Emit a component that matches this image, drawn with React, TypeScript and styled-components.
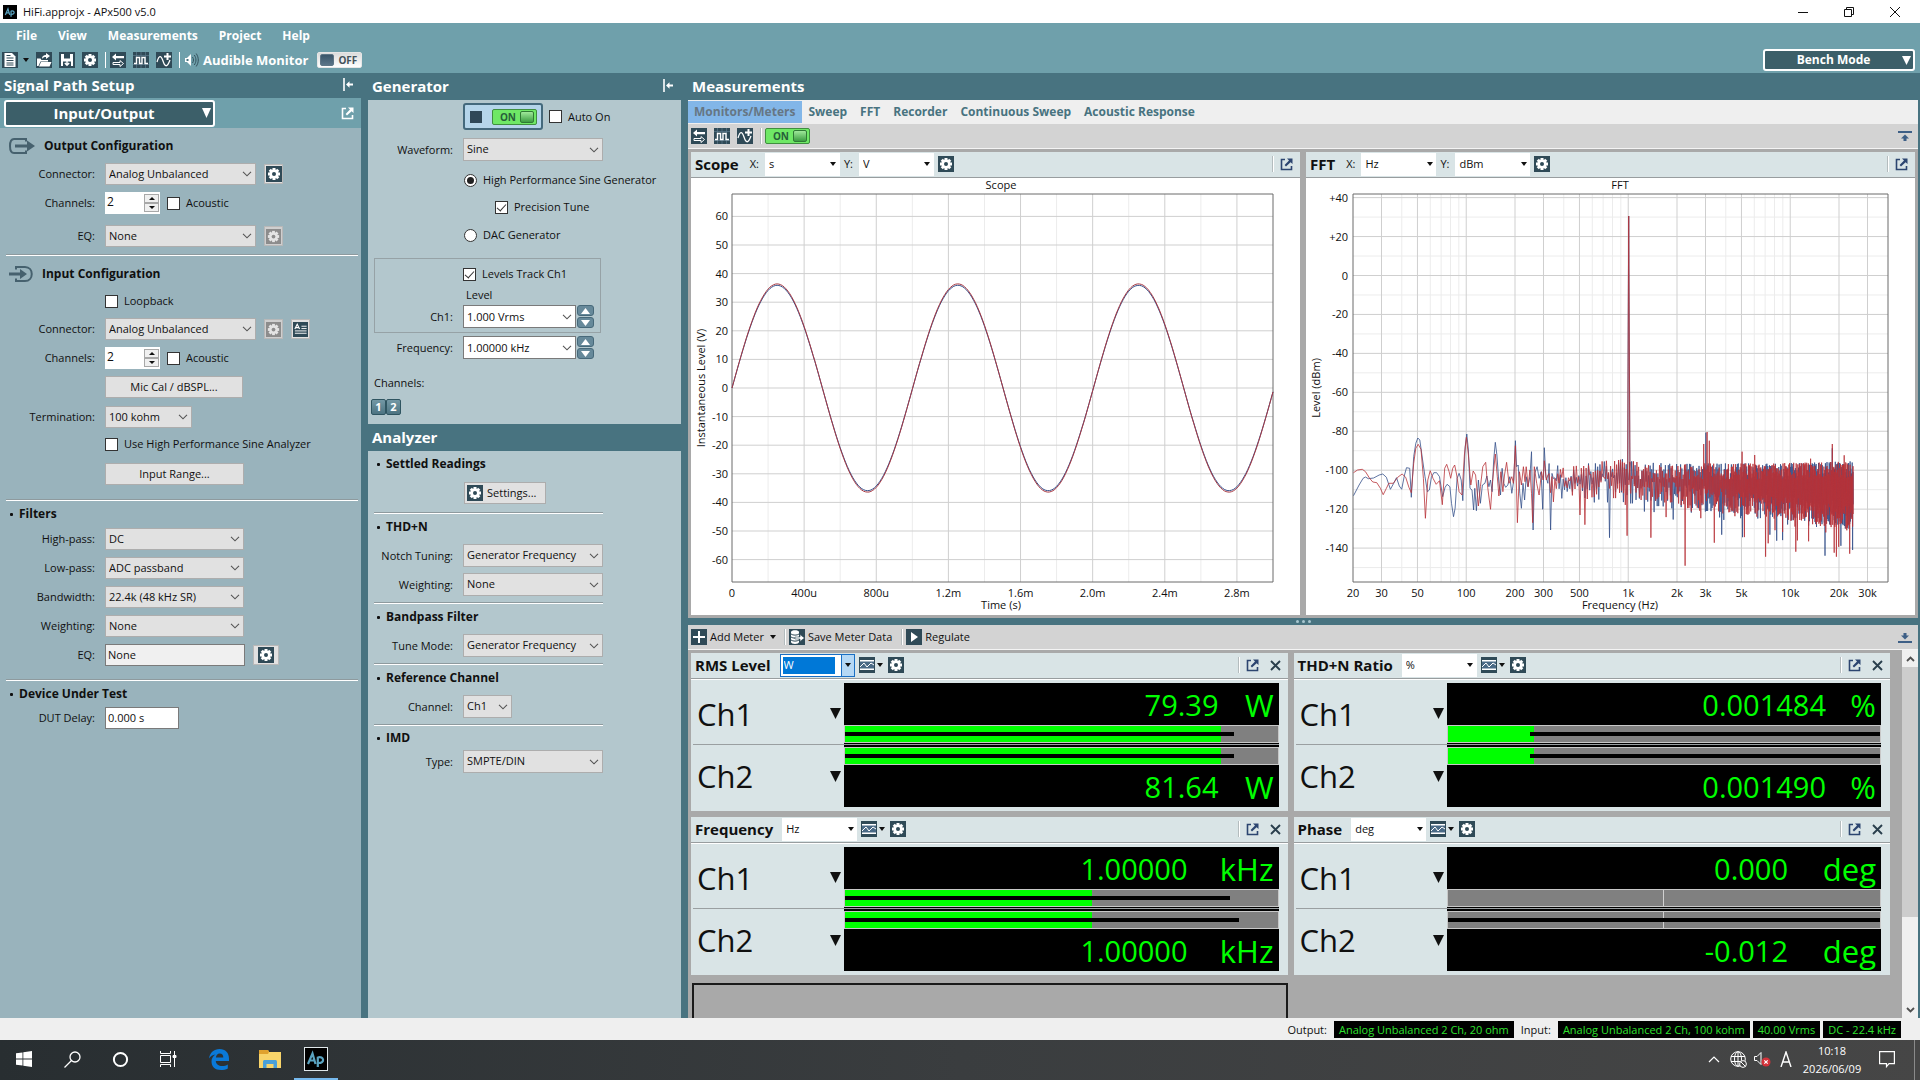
import React, { useId } from "react";
import styled, { createGlobalStyle, css } from "styled-components";

const c = {
  menu: "#6fa0ab",
  dark: "#487380",
  deep: "#3c5f69",
  side: "#99b3bc",
  mid: "#b3c7cd",
  gutter: "#a9a9a9",
  bar: "#d3d3d3",
  face: "#e1e1e1",
  pale: "#d9e4e6",
  navy: "#2c4570",
  green: "#00ff00",
};

const Global = createGlobalStyle`
  * { box-sizing: border-box; }
  body { margin: 0; font: 11px/16px "Open Sans", "Noto Sans", sans-serif; color: #101010; background: ${c.dark}; }
  button, input, select { font: inherit; color: inherit; margin: 0; border-radius: 0; }
  button { padding: 0; border: 0; background: none; cursor: pointer; }
  h1, h2, h3, p { margin: 0; }
  svg { display: block; flex: none; }
`;

/* ---------- shell ---------- */

const Page = styled.div`
  display: flex;
  flex-direction: column;
  height: 100vh;
  min-height: 860px;
`;
const TitleBar = styled.header`
  display: flex;
  align-items: center;
  height: 23px;
  padding: 0 2px 0 3px;
  background: #fff;
  font-size: 11px;
  gap: 6px;
`;
const WindowButtons = styled.div`
  display: flex;
  margin-left: auto;
`;
const WindowButton = styled.button`
  display: grid;
  place-items: center;
  width: 46px;
  height: 22px;
`;
const TopArea = styled.div`
  display: flex;
  justify-content: space-between;
  align-items: flex-end;
  height: 50px;
  padding: 0 5px 2px 0;
  background: ${c.menu};
`;
const MenuBar = styled.nav`
  display: flex;
  height: 26px;
  align-items: center;
  gap: 21px;
  padding-left: 16px;
  color: #fff;
  font-size: 12px;
  font-weight: 700;
`;
const MenuItem = styled.button``;
const ToolRow = styled.div`
  display: flex;
  align-items: center;
  height: 22px;
  padding-left: 2px;
  color: #fff;
`;
const IconButton = styled.button<{ $gap?: number; $inner?: number }>`
  display: flex;
  align-items: center;
  gap: ${(p) => p.$inner ?? 3}px;
  margin-right: ${(p) => p.$gap ?? 7}px;
`;
const Divider = styled.span<{ $gap?: number; $light?: boolean }>`
  width: 2px;
  height: 16px;
  margin-right: ${(p) => p.$gap ?? 4}px;
  border-left: 1px solid ${(p) => (p.$light ? "#fff" : "#b4bcbe")};
  border-right: 1px solid ${(p) => (p.$light ? "transparent" : "#fff")};
`;
const ToolLabel = styled.span`
  margin: 0 9px 0 4px;
  font-size: 13px;
  font-weight: 700;
`;
const PickerButton = styled.button<{ $large?: boolean }>`
  display: flex;
  align-items: center;
  width: ${(p) => (p.$large ? 211 : 152)}px;
  height: ${(p) => (p.$large ? 27 : 22)}px;
  padding-right: 2px;
  border: 2px solid #fff;
  border-radius: 3px;
  background: ${c.deep};
  color: #fff;
  font-size: ${(p) => (p.$large ? 15 : 12)}px;
  font-weight: 700;
  span { flex: 1; }
`;
const Workspace = styled.main`
  display: grid;
  grid-template-columns: 361px 313px minmax(0, 1fr);
  column-gap: 7px;
  flex: 1;
  min-height: 0;
  padding-right: 2px;
  background: ${c.dark};
`;
const Column = styled.section`
  display: flex;
  flex-direction: column;
  min-width: 0;
  min-height: 0;
`;
const PanelTitle = styled.div<{ $short?: boolean }>`
  display: flex;
  align-items: center;
  justify-content: space-between;
  flex: none;
  height: ${(p) => (p.$short ? 25 : 27)}px;
  padding: 0 8px 2px 4px;
  color: #fff;
  h2 { font-size: 15px; line-height: 20px; font-weight: 700; }
`;
const SubBar = styled.div`
  display: flex;
  align-items: center;
  justify-content: space-between;
  flex: none;
  height: 30px;
  padding: 0 7px 0 4px;
  background: ${c.menu};
  color: #fff;
`;
const SideBody = styled.div`
  flex: 1;
  background: ${c.side};
`;
const MidBody = styled.div<{ $fill?: boolean }>`
  flex: ${(p) => (p.$fill ? 1 : "none")};
  height: ${(p) => (p.$fill ? "auto" : "324px")};
  padding: 3px 0 0 6px;
  background: ${c.mid};
`;

/* ---------- form parts ---------- */

const Rule = styled.hr<{ $short?: boolean; $top?: number }>`
  height: 2px;
  margin: ${(p) => p.$top ?? 7}px 0 0 ${(p) => (p.$short ? 0 : 6)}px;
  width: ${(p) => (p.$short ? 229 : 352)}px;
  border: 0;
  border-top: 1px solid #8e9a9e;
  border-bottom: 1px solid #fff;
`;
const ConfigTitle = styled.h3`
  display: flex;
  align-items: center;
  gap: 9px;
  height: 35px;
  padding-left: 9px;
  font-size: 12px;
  font-weight: 700;
`;
const SectionTitle = styled.h3<{ $inset?: number; $height?: number }>`
  display: flex;
  align-items: center;
  gap: 6px;
  height: ${(p) => p.$height ?? 26}px;
  padding-left: ${(p) => p.$inset ?? 10}px;
  font-size: 12px;
  font-weight: 700;
  &::before { content: ""; width: 3px; height: 3px; background: #101010; border-radius: 1px; }
`;
const FieldRow = styled.div<{ $mid?: boolean; $top?: number; $height?: number }>`
  display: grid;
  grid-template-columns: ${(p) => (p.$mid ? 79 : 95)}px minmax(0, 1fr);
  column-gap: 10px;
  align-items: center;
  height: ${(p) => p.$height ?? 22}px;
  margin-top: ${(p) => p.$top ?? 7}px;
`;
const FieldLabel = styled.label`
  text-align: right;
  white-space: nowrap;
`;
const Controls = styled.div<{ $gap?: number; $indent?: number }>`
  display: flex;
  align-items: center;
  gap: ${(p) => p.$gap ?? 8}px;
  grid-column: 2;
  padding-left: ${(p) => p.$indent ?? 0}px;
  white-space: nowrap;
`;
const SelectBox = styled.span<{ $w: number; $h?: number; $white?: boolean }>`
  display: inline-grid;
  align-items: center;
  width: ${(p) => p.$w}px;
  height: ${(p) => p.$h ?? 22}px;
  border: 1px solid ${(p) => (p.$white ? "#7a7a7a" : "#adadad")};
  background: ${(p) => (p.$white ? "#fff" : c.face)};
  > * { grid-area: 1 / 1; }
  > svg { justify-self: end; margin-right: 3px; pointer-events: none; }
  select, input {
    appearance: none;
    width: 100%;
    height: 100%;
    min-width: 0;
    padding: 0 0 1px 3px;
    border: 0;
    outline: 0;
    background: transparent;
  }
`;
const TextBox = styled.input<{ $w: number; $off?: boolean }>`
  width: ${(p) => p.$w}px;
  height: 22px;
  padding: 0 0 2px 2px;
  border: 1px solid #7a7a7a;
  background: ${(p) => (p.$off ? "#f0f0f0" : "#fff")};
`;
const SpinBox = styled.span`
  display: flex;
  align-items: center;
  width: 55px;
  height: 22px;
  padding-right: 1px;
  background: #fff;
  input { width: 39px; height: 20px; padding: 0 0 4px 2px; border: 0; background: transparent; font-size: 12px; }
`;
const SpinArrows = styled.span`
  display: flex;
  flex-direction: column;
  button {
    display: grid;
    place-items: center;
    width: 15px;
    height: 9px;
    border: 1px solid #a8a8a8;
    background: #f0f0f0;
  }
`;
const StepArrows = styled.span`
  display: flex;
  flex-direction: column;
  gap: 1px;
  button {
    display: grid;
    place-items: center;
    width: 17px;
    height: 11px;
    border: 1px solid #47697a;
    border-radius: 3px;
    background: #66899a;
  }
`;
const Check = styled.label<{ $gap?: number }>`
  display: inline-flex;
  align-items: center;
  gap: ${(p) => p.$gap ?? 6}px;
  white-space: nowrap;
  input {
    appearance: none;
    display: grid;
    place-items: center;
    width: 13px;
    height: 13px;
    border: 1px solid #333;
    background: #fff;
  }
  input[type="radio"] { border-radius: 50%; }
  input[type="checkbox"]:checked::after {
    content: "";
    width: 4px;
    height: 8px;
    margin-bottom: 2px;
    border: solid #333;
    border-width: 0 1px 1px 0;
    transform: rotate(42deg);
  }
  input[type="radio"]:checked::after {
    content: "";
    width: 7px;
    height: 7px;
    border-radius: 50%;
    background: #222;
  }
`;
const PushButton = styled.button<{ $w: number; $start?: boolean }>`
  display: flex;
  align-items: center;
  justify-content: ${(p) => (p.$start ? "flex-start" : "center")};
  gap: 4px;
  width: ${(p) => p.$w}px;
  height: 22px;
  padding-left: ${(p) => (p.$start ? 2 : 0)}px;
  border: 1px solid #adadad;
  background: ${c.face};
`;
const SmallButton = styled.button<{ $w?: number; $off?: boolean }>`
  display: grid;
  place-items: center;
  width: ${(p) => p.$w ?? 19}px;
  height: 20px;
  border: 1px solid #b8b8b8;
  background: ${(p) => (p.$off ? "#cfcfcf" : c.face)};
`;
const GroupBox = styled.div`
  width: 227px;
  height: 75px;
  margin-top: 12px;
  padding-top: 5px;
  box-shadow: inset 0 0 0 1px #96a2a6;
`;
const ToggleShell = styled.button<{ $on?: boolean }>`
  display: flex;
  align-items: center;
  gap: 4px;
  width: 45px;
  height: 16px;
  padding: 0 2px;
  flex-direction: ${(p) => (p.$on ? "row-reverse" : "row")};
  border: 1px solid ${(p) => (p.$on ? "#3f8f3f" : "#e6e6e6")};
  border-radius: 2px;
  background: ${(p) => (p.$on ? "#6fe866" : "linear-gradient(#dcdcdc, #fff)")};
  color: ${(p) => (p.$on ? "#27603a" : "#44525a")};
  font-size: 10px;
  line-height: 12px;
  font-weight: 700;
  i {
    width: 14px;
    height: 12px;
    border-radius: 2px;
    border: 1px solid ${(p) => (p.$on ? "#2f7a35" : "#5f7686")};
    background: ${(p) => (p.$on ? "linear-gradient(#9fe89a, #3c9e42)" : "linear-gradient(#3a566a, #5b7588)")};
  }
`;
const GeneratorSwitch = styled.span`
  display: flex;
  align-items: center;
  justify-content: space-between;
  width: 80px;
  height: 27px;
  padding: 0 4px 0 5px;
  border: 2px solid #44697c;
  border-radius: 3px;
  background: #b5d5ea;
`;
const StopMark = styled.span`
  width: 12px;
  height: 12px;
  background: #2f4858;
`;
const ChannelButtons = styled.div`
  display: flex;
  margin: 5px 0 0 -3px;
  button {
    width: 15px;
    height: 16px;
    border: 1px solid #2f5561;
    border-radius: 2px;
    background: linear-gradient(#7398a5, #4d7482);
    color: #fff;
    font-size: 11px;
    line-height: 12px;
    font-weight: 700;
  }
`;

/* ---------- measurements ---------- */

const Tabs = styled.nav`
  display: flex;
  flex: none;
  height: 24px;
  padding-top: 1px;
  background: #efefef;
`;
const Tab = styled.button<{ $active?: boolean }>`
  height: 22px;
  padding: 0 7px 0 6px;
  background: ${(p) => (p.$active ? "#82b6e8" : "transparent")};
  color: ${(p) => (p.$active ? "#667684" : "#487380")};
  font-size: 12px;
  font-weight: 700;
`;
const ToolStrip = styled.div`
  display: flex;
  align-items: center;
  flex: none;
  height: 25px;
  padding: 0 6px 0 3px;
  background: ${c.bar};
  border-bottom: 1px solid #f4f4f4;
`;
const StripEnd = styled.span`
  margin-left: auto;
`;
const ChartRow = styled.div`
  display: grid;
  grid-template-columns: minmax(0, 1fr) minmax(0, 1fr);
  gap: 6px;
  flex: 1;
  min-height: 0;
  padding: 3px;
  background: ${c.gutter};
`;
const Card = styled.article<{ $white?: boolean }>`
  display: flex;
  flex-direction: column;
  min-height: 0;
  background: ${(p) => (p.$white ? "#fff" : c.pale)};
`;
const CardHead = styled.div<{ $wide?: boolean }>`
  display: flex;
  align-items: center;
  flex: none;
  height: 26px;
  padding: 0 7px 1px 4px;
  border-bottom: 1px solid #989d9f;
  background: ${c.pale};
  h3 { font-size: 15px; line-height: 20px; font-weight: 700; white-space: nowrap; margin-right: ${(p) => (p.$wide ? 11 : 9)}px; }
  label { margin-right: 6px; }
`;
const UnitSelect = styled.span<{ $focus?: boolean }>`
  display: grid;
  grid-template-columns: 1fr 13px;
  align-items: center;
  flex: none;
  width: 75px;
  height: 23px;
  margin-right: 4px;
  border: ${(p) => (p.$focus ? "1px solid #1a6fc4" : "0")};
  background: #fff;
  select {
    appearance: none;
    grid-area: 1 / 1 / 2 / 3;
    height: 100%;
    min-width: 0;
    padding: 0 0 0 4px;
    border: 0;
    outline: 0;
    background: transparent;
    ${(p) => p.$focus && css`
      padding: 0 0 1px 3px;
      color: #fff;
      background: linear-gradient(#0078d7, #0078d7) 2px 2px / 52px 17px no-repeat;
    `}
  }
  > span {
    display: grid;
    place-items: center;
    grid-area: 1 / 2;
    height: 100%;
    pointer-events: none;
    ${(p) => p.$focus && css`background: #b5d8f5; border-left: 1px solid #1a6fc4;`}
  }
`;
const HeadEnd = styled.span`
  display: flex;
  align-items: center;
  gap: 6px;
  margin-left: auto;
`;
const Chart = styled.svg`
  flex: 1;
  width: 100%;
  min-height: 0;
  font: 11px "Open Sans", "Noto Sans", sans-serif;
  fill: #101010;
`;
const Splitter = styled.div`
  display: flex;
  align-items: center;
  justify-content: center;
  gap: 3px;
  flex: none;
  height: 7px;
  i { width: 3px; height: 3px; border-radius: 50%; background: #a9c6cf; }
`;
const MeterPane = styled.div`
  display: flex;
  flex: none;
  height: 368px;
  overflow: hidden;
  background: ${c.gutter};
`;
const MeterGrid = styled.div`
  display: grid;
  grid-template-columns: minmax(0, 1fr) minmax(0, 1fr);
  grid-auto-rows: 158px;
  gap: 6px;
  flex: 1;
  padding: 3px 12px 0 3px;
`;
const EmptySlot = styled.div`
  margin: 2px 0 0 1px;
  border: 2px solid #1a1a1a;
`;
const ScrollTrack = styled.div`
  display: flex;
  flex-direction: column;
  width: 16px;
  background: #f0f0f0;
`;
const ScrollArrow = styled.button`
  display: grid;
  place-items: center;
  height: 17px;
  color: #505050;
`;
const ScrollThumb = styled.div`
  height: 250px;
  margin-bottom: auto;
  background: #cdcdcd;
`;
const MeterBody = styled.div`
  display: grid;
  grid-template-rows: 62px 62px;
  flex: 1;
  padding: 3px 9px 0 2px;
  border-top: 1px solid #fff;
`;
const MeterLine = styled.div`
  display: grid;
  grid-template-columns: 151px minmax(0, 1fr);
  &:first-child { border-bottom: 1px solid #9a9fa1; }
`;
const ChannelName = styled.div`
  display: flex;
  align-items: center;
  justify-content: space-between;
  padding: 0 3px 0 4px;
  font-size: 31px;
  line-height: 40px;
`;
const Display = styled.div<{ $flip?: boolean }>`
  display: flex;
  flex-direction: ${(p) => (p.$flip ? "column-reverse" : "column")};
  background: #000;
`;
const Readout = styled.output<{ $unitWidth: number }>`
  display: flex;
  justify-content: flex-end;
  height: 42px;
  padding-right: 5px;
  color: ${c.green};
  font-size: 29px;
  line-height: 44px;
  white-space: nowrap;
  b { font-size: 31px; font-weight: 400; width: ${(p) => p.$unitWidth}px; text-align: right; }
`;
const Gauge = styled.div`
  display: grid;
  align-items: center;
  height: 18px;
  border: 1px solid #c8c8c8;
  background: #808080;
  > * { grid-area: 1 / 1; }
`;
const GaugeFill = styled.div`
  height: 100%;
  background: ${c.green};
`;
const GaugePeak = styled.div`
  height: 4px;
  background: #000;
`;
const GaugeMid = styled.div`
  justify-self: center;
  width: 1px;
  height: 100%;
  background: #d0d0d0;
`;

/* ---------- bottom bars ---------- */

const StatusBar = styled.footer`
  display: flex;
  align-items: center;
  justify-content: flex-end;
  gap: 3px;
  flex: none;
  height: 22px;
  padding: 1px 19px 0 0;
  background: #efefef;
  span { margin: 0 4px; }
  output { padding: 0 5px; height: 17px; line-height: 17px; background: #000; color: #2fe02f; }
`;
const Taskbar = styled.footer`
  display: flex;
  flex: none;
  height: 40px;
  background: linear-gradient(90deg, #282e31, #3a3d3f 50%, #464646);
  color: #fff;
`;
const TaskButton = styled.button<{ $active?: boolean; $w?: number }>`
  display: grid;
  place-items: center;
  width: ${(p) => p.$w ?? 48}px;
  border-bottom: 2px solid ${(p) => (p.$active ? "#76b9ed" : "transparent")};
`;
const Tray = styled.div`
  display: flex;
  align-items: center;
  margin-left: auto;
`;
const Clock = styled.time`
  width: 68px;
  text-align: center;
  line-height: 18px;
`;
const Edge = styled.span`
  width: 6px;
  height: 40px;
  margin-left: 6px;
  border-left: 1px solid #8a8a8a;
`;

/* ---------- icons ---------- */

const Tile = ({ children, s = 16, fill = "#2f4a57" }: { children: React.ReactNode; s?: number; fill?: string }) => (
  <svg width={s} height={s} viewBox="0 0 16 16" aria-hidden="true">
    <rect width="16" height="16" fill={fill} />
    {children}
  </svg>
);
const Gear = ({ s = 16, off }: { s?: number; off?: boolean }) => (
  <Tile s={s} fill={off ? "#8c8c8c" : undefined}>
    <g fill={off ? "#e4e4e4" : "#fff"}>
      {[0, 45, 90, 135].map((a) => (
        <rect key={a} x="6.5" y="2" width="3" height="12" transform={`rotate(${a} 8 8)`} />
      ))}
      <circle cx="8" cy="8" r="4.6" />
    </g>
    <circle cx="8" cy="8" r="2" fill={off ? "#8c8c8c" : "#2f4a57"} />
  </Tile>
);
const Swap = () => (
  <Tile>
    <path d="M2 5l4-3.5V4h8v2.2H6v2.3z" fill="#fff" />
    <path d="M13.5 11.5L10 8.600v1.900H3v2h7v2z" fill="none" stroke="#fff" />
  </Tile>
);
const Square = () => (
  <Tile>
    <path d="M0 3.500h16M0 12.500h16M3.500 0v16M12.500 0v16M8 0v16" stroke="#5b7a8c" strokeWidth=".7" />
    <path d="M1 11.500h2.500v-6h3v6h2.500v-6h3v6H15" fill="none" stroke="#fff" strokeWidth="1.400" />
  </Tile>
);
const AddWave = () => (
  <Tile>
    <path d="M1 10c2-7 4-7 6-1s4 7 7-1" fill="none" stroke="#fff" strokeWidth="1.300" />
    <path d="M11.500 1v7M8 4.500h7" stroke="#fff" strokeWidth="2" />
  </Tile>
);
const Graph = () => (
  <Tile>
    <rect x="1" y="3" width="14" height="10" fill="#fff" />
    <rect x="1" y="4.500" width="14" height="7" fill="#4a6a86" />
    <path d="M1 10l4-4 3 4 4-4 3 2" fill="none" stroke="#fff" />
  </Tile>
);
const NewDoc = () => (
  <Tile>
    <path d="M2.500 1H10l3.500 3.500V15h-11z" fill="#fff" />
    <path d="M4.500 6h7M4.500 8.500h7M4.500 11h7M4.500 13h7M4.500 3.500h4" stroke="#2f4a57" />
  </Tile>
);
const OpenDoc = () => (
  <Tile>
    <path d="M1 14V6.500h3.500L5.500 8H12v1.500H4.500L2.500 14zM3 14.500l2-4.500h10.500l-2 4.500z" fill="#fff" />
    <path d="M6 7c0-3 1.500-4 4-4V1l4 3-4 3V5C8 5 7 5.500 6 7z" fill="#fff" />
  </Tile>
);
const Save = () => (
  <Tile>
    <path d="M2 2h12v12H2z" fill="#fff" />
    <path d="M5 2h6v4.500H5zM4 9.500h8V14H4z" fill="#2f4a57" />
    <path d="M8 8.500V13M5.800 11L8 13.200 10.200 11" fill="none" stroke="#fff" strokeWidth="1.400" />
  </Tile>
);
const Notes = () => (
  <Tile s={15}>
    <path d="M9 4.500h5.500M9 7h5.500M2 9.500h12.500M2 12h12.500" stroke="#fff" />
    <path d="M2 7.500L4.500 2.500 7 7.500M3 6h3" fill="none" stroke="#fff" strokeWidth="1.200" />
  </Tile>
);
const Plus = () => (
  <Tile>
    <path d="M8 2v12M2 8h12" stroke="#fff" strokeWidth="2" />
  </Tile>
);
const Play = () => (
  <Tile>
    <path d="M5 3l7 5-7 5z" fill="#fff" />
  </Tile>
);
const SaveData = () => (
  <Tile>
    <path d="M2 3c0-2.500 8-2.500 8 0v10c0 2.500-8 2.500-8 0z" fill="#fff" />
    <path d="M2 5c2 1.500 6 1.500 8 0M2 8c2 1.500 6 1.500 8 0M2 11c2 1.500 6 1.500 8 0" fill="none" stroke="#2f4a57" />
    <path d="M6 8h5V5.500L15.500 9 11 12.500V10H6z" fill="#fff" stroke="#2f4a57" strokeWidth=".6" />
  </Tile>
);
const Speaker = () => (
  <svg width="15" height="16" viewBox="0 0 15 16" aria-hidden="true">
    <path d="M1 6h2l4-4v12l-4-4H1z" fill="#fff" />
    <path d="M2.500 7h2v2h-2z" fill="#487380" />
    <path d="M8.500 5c1.300 2 1.300 4 0 6M10.300 3c2.200 3.300 2.200 6.700 0 10M12.200 1.500c2.800 4.300 2.800 8.700 0 13" fill="none" stroke="#34525e" />
  </svg>
);
const Caret = () => (
  <svg width="6" height="4" viewBox="0 0 6 4" aria-hidden="true">
    <path d="M0 0h6L3 4z" fill="#101010" />
  </svg>
);
const Chevron = () => (
  <svg width="10" height="6" viewBox="0 0 10 6" aria-hidden="true">
    <path d="M1 .8l4 4 4-4" fill="none" stroke="#555" strokeWidth="1.100" />
  </svg>
);
const Tri = ({ w = 12, h = 13, up, fill = "#101010" }: { w?: number; h?: number; up?: boolean; fill?: string }) => (
  <svg width={w} height={h} viewBox="0 0 10 10" preserveAspectRatio="none" aria-hidden="true">
    <path d={up ? "M0 10L5 0l5 10z" : "M0 0h10L5 10z"} fill={fill} />
  </svg>
);
const Collapse = () => (
  <svg width="10" height="13" viewBox="0 0 10 13" aria-hidden="true">
    <path d="M1 0v13" stroke="#fff" strokeWidth="1.600" />
    <path d="M3 6.500l3.500-3.200v2.200H10v2H6.500v2.200z" fill="#fff" />
  </svg>
);
const PopOut = ({ color = c.navy }: { color?: string }) => (
  <svg width="13" height="13" viewBox="0 0 13 13" aria-hidden="true">
    <path d="M5 1.500H1.500v10h10V8" fill="none" stroke={color} strokeWidth="1.600" />
    <path d="M7 .5h5.500V6L10.600 4.200 6 8.500 4.600 7 9 2.500z" fill={color} />
  </svg>
);
const Dock = ({ down }: { down?: boolean }) => (
  <svg width="14" height="11" viewBox="0 0 14 11" aria-hidden="true">
    <g transform={down ? "matrix(1 0 0 -1 0 11)" : undefined} fill="#3d5f86">
      <path d="M0 0h14v2H0zM7 3.500l4 4H8.500V10h-3V7.500H3z" />
    </g>
  </svg>
);
const CloseX = () => (
  <svg width="11" height="11" viewBox="0 0 11 11" aria-hidden="true">
    <path d="M1 1l9 9M10 1l-9 9" stroke="#2a3f4d" strokeWidth="1.900" />
  </svg>
);
const PortArrow = ({ into }: { into?: boolean }) =>
  into ? (
    <svg width="24" height="16" viewBox="0 0 24 16" aria-hidden="true">
      <path d="M7 3.500V1h9c9 0 9 14 0 14H7v-2.500" fill="none" stroke="#46616e" strokeWidth="2" />
      <path d="M0 6.500h11V3l7 5-7 5V9.500H0z" fill="#46616e" />
    </svg>
  ) : (
    <svg width="26" height="16" viewBox="0 0 26 16" aria-hidden="true">
      <path d="M17 3.500V1H5C2 1 1 3 1 8s1 7 4 7h12v-2.500" fill="none" stroke="#46616e" strokeWidth="2" />
      <path d="M6 6.500h12V2.500L26 8l-8 5.500v-4H6z" fill="#46616e" />
    </svg>
  );
const ApLogo = ({ s }: { s: number }) => (
  <svg width={s} height={s} viewBox="0 0 24 24" role="img" aria-label="Ap">
    <rect width="24" height="24" fill="#000" stroke={s > 16 ? "#dfe7ea" : "none"} strokeWidth="2" />
    <path
      d="M4 17L8.500 6.500 11.500 17M6 13.500h5M13.800 20V9.800M13.800 10.500c6-2 8 6 0 5.500"
      fill="none"
      stroke="#5aa3c0"
      strokeWidth="2.200"
    />
  </svg>
);

/* ---------- reusable controls ---------- */

type PickProps = { label: string; value: string; w: number; h?: number };
const Pick = ({ label, value, w, h, id }: PickProps & { id?: string }) => (
  <SelectBox $w={w} $h={h}>
    <select id={id} aria-label={label} defaultValue={value}>
      <option>{value}</option>
    </select>
    <Chevron />
  </SelectBox>
);
const Field = ({
  label,
  value,
  w,
  h,
  mid,
  top,
  children,
}: PickProps & { mid?: boolean; top?: number; children?: React.ReactNode }) => {
  const id = useId();
  return (
    <FieldRow $mid={mid} $top={top} $height={h}>
      <FieldLabel htmlFor={id}>{label}:</FieldLabel>
      <Controls>
        <Pick id={id} label={label} value={value} w={w} h={h} />
        {children}
      </Controls>
    </FieldRow>
  );
};
const ChannelField = ({ top }: { top?: number }) => {
  const id = useId();
  return (
    <FieldRow $top={top}>
      <FieldLabel htmlFor={id}>Channels:</FieldLabel>
      <Controls $gap={7}>
        <SpinBox>
          <input id={id} defaultValue="2" />
          <SpinArrows>
            <button aria-label="More channels"><Tri up w={6} h={3} /></button>
            <button aria-label="Fewer channels"><Tri w={6} h={3} /></button>
          </SpinArrows>
        </SpinBox>
        <Check><input type="checkbox" />Acoustic</Check>
      </Controls>
    </FieldRow>
  );
};
const ComboField = ({ label, value, top }: { label: string; value: string; top?: number }) => {
  const id = useId();
  return (
    <FieldRow $mid $top={top} $height={23}>
      <FieldLabel htmlFor={id}>{label}:</FieldLabel>
      <Controls $gap={1}>
        <SelectBox $w={113} $h={23} $white>
          <input id={id} defaultValue={value} />
          <Chevron />
        </SelectBox>
        <StepArrows>
          <button aria-label={`Raise ${label}`}><Tri up w={9} h={6} fill="#fff" /></button>
          <button aria-label={`Lower ${label}`}><Tri w={9} h={6} fill="#fff" /></button>
        </StepArrows>
      </Controls>
    </FieldRow>
  );
};
const Toggle = ({ on, label }: { on?: boolean; label: string }) => (
  <ToggleShell $on={on} aria-label={label} aria-pressed={!!on}>
    <i />
    {on ? "ON" : "OFF"}
  </ToggleShell>
);
const Units = ({ value, label, focus, id }: { value: string; label: string; focus?: boolean; id?: string }) => (
  <UnitSelect $focus={focus}>
    <select id={id} aria-label={label} defaultValue={value}>
      <option>{value}</option>
    </select>
    <span><Caret /></span>
  </UnitSelect>
);

/* ---------- charts ---------- */

const VIEW_W = 609;
const VIEW_H = 437;
const TOP = 16;
const BOTTOM = 404;

const Frame = ({ x0, x1 }: { x0: number; x1: number }) => (
  <path d={`M${x0} ${TOP}H${x1}V${BOTTOM}H${x0}Z`} fill="none" stroke="#6a6a6a" />
);

const ScopeChart = () => {
  const x0 = 41;
  const x1 = 582;
  const y = (v: number) => 210 - v * 2.86;
  const x = (t: number) => x0 + (t / 3) * (x1 - x0);
  const wave = (amp: number) => {
    const pts: string[] = [];
    for (let i = 0; i <= 300; i++) {
      const t = i / 100;
      pts.push(`${x(t).toFixed(1)},${y(amp * Math.sin((2 * Math.PI * t) / 1.002)).toFixed(1)}`);
    }
    return pts.join(" ");
  };
  const times = ["0", "400u", "800u", "1.2m", "1.6m", "2.0m", "2.4m", "2.8m"];
  const volts = [60, 50, 40, 30, 20, 10, 0, -10, -20, -30, -40, -50, -60];
  return (
    <Chart viewBox={`0 0 ${VIEW_W} ${VIEW_H}`} role="img" aria-label="Scope">
      <text x="310" y="11" textAnchor="middle">Scope</text>
      {Array.from({ length: 14 }, (_, i) => (
        <path key={i} d={`M${x((i + 1) * 0.2)} ${TOP}V${BOTTOM}`} stroke={i % 2 ? "#cfcfcf" : "#ececec"} />
      ))}
      {volts.map((v) => (
        <g key={v}>
          <path d={`M${x0} ${y(v)}H${x1}`} stroke="#cfcfcf" />
          <text x={x0 - 4} y={y(v) + 4} textAnchor="end">{v}</text>
        </g>
      ))}
      {times.map((t, i) => (
        <text key={t} x={x(i * 0.4)} y="419" textAnchor="middle">{t}</text>
      ))}
      <Frame x0={x0} x1={x1} />
      <polyline points={wave(35.9)} fill="none" stroke="#35508a" />
      <polyline points={wave(36.4)} fill="none" stroke="#a83a44" />
      <text x="310" y="431" textAnchor="middle">Time (s)</text>
      <text transform="translate(14 210) rotate(-90)" textAnchor="middle">Instantaneous Level (V)</text>
    </Chart>
  );
};

const blueKnots = [
  158, 287, 172, 255, 182, 235, 188, 231, 195, 236, 208, 234, 222, 225, 231, 222, 240, 232, 250, 268, 258, 250, 265, 233, 272, 258, 278, 268, 285, 225, 290, 203,
  298, 205, 302, 292, 308, 170, 313, 130, 318, 114, 323, 120, 330, 180, 336, 230, 342, 275, 347, 270, 352, 232, 358, 218, 365, 218, 372, 230, 380, 290, 386, 262,
  391, 253, 398, 260, 402, 310, 407, 350, 411, 325, 416, 235, 421, 220, 426, 240, 430, 302, 436, 140, 440, 102, 444, 150, 448, 265, 453, 270, 457, 330, 460, 265,
  464, 332, 469, 240, 474, 310, 479, 255, 485, 250, 490, 228, 495, 260, 499, 240, 503, 275, 507, 180, 511, 127, 515, 165, 520, 250, 524, 285, 528, 205, 532, 250,
  537, 262, 542, 255, 547, 230, 552, 280, 557, 240, 561, 122, 564, 200, 568, 195, 572, 280, 576, 325, 580, 250, 584, 300, 588, 230, 592, 260, 597, 230, 601, 155,
  605, 390, 609, 220, 615, 200, 620, 235, 625, 215, 629, 328, 633, 143, 637, 230, 642, 250,
];
const redKnots = [
  158, 218, 168, 210, 180, 208, 188, 215, 198, 235, 206, 246, 216, 248, 225, 265, 232, 284, 240, 265, 246, 250, 257, 250, 268, 232, 279, 222, 288, 232, 296, 262,
  302, 278, 308, 190, 313, 145, 319, 133, 326, 148, 332, 235, 337, 355, 343, 240, 349, 212, 356, 235, 364, 253, 372, 242, 379, 314, 385, 205, 390, 193, 396, 215,
  400, 235, 405, 205, 410, 195, 415, 225, 421, 275, 428, 285, 434, 165, 439, 112, 444, 165, 450, 255, 456, 213, 462, 225, 469, 318, 474, 260, 480, 200, 487, 187,
  492, 262, 499, 328, 504, 245, 511, 162, 516, 230, 520, 288, 525, 215, 530, 275, 534, 225, 539, 187, 545, 250, 552, 230, 556, 250, 561, 137, 566, 368, 571, 215,
  576, 255, 581, 200, 585, 245, 588, 200, 593, 260, 597, 210, 601, 280, 604, 368, 608, 200, 614, 250, 620, 285, 626, 215, 630, 240, 633, 182, 638, 240, 642, 225,
];
// Tall peaks and deep notches above 300 Hz, keyed by position along the trace.
const bluePeaks: Record<number, number> = { 964: 145, 1036: 98, 1350: 145 };
const redPeaks: Record<number, number> = {
  862: 147, 890: 151, 1030: 132, 1038: 96, 1044: 122, 1126: 155, 1156: 165, 1186: 148, 1296: 176, 1350: 132, 1380: 166,
};
const blueDips: Record<number, number> = { 648: 390, 778: 395, 796: 413, 822: 383, 880: 422, 920: 380, 972: 443, 1074: 404, 1212: 422, 1332: 467, 1400: 450 };
const redDips: Record<number, number> = {
  678: 368, 734: 374, 840: 407, 898: 413, 984: 497, 1000: 539, 1030: 413, 1038: 494, 1056: 428, 1184: 470, 1190: 430, 1258: 455, 1290: 424, 1354: 458, 1360: 470, 1394: 461,
};

const mix = (t: number, stops: number[][]) => {
  for (let i = 1; i < stops.length; i++) {
    if (t <= stops[i][0]) {
      const [a, b] = [stops[i - 1], stops[i]];
      return a[1] + ((b[1] - a[1]) * (t - a[0])) / (b[0] - a[0]);
    }
  }
  return stops[stops.length - 1][1];
};
const trace = (knots: number[], peaks: Record<number, number>, dips: Record<number, number>, seed: number) => {
  let s = seed;
  const rnd = () => {
    s = (s * 16807) % 2147483647;
    return s / 2147483647;
  };
  const pts: string[] = [];
  const put = (u: number, v: number) => pts.push(`${(u / 2.489 - 16).toFixed(1)},${(v / 3 + 222).toFixed(1)}`);
  for (let i = 0; i < knots.length; i += 2) put(knots[i], knots[i + 1]);
  let high = false;
  let carrierDone = false;
  const used = new Set<number>();
  for (let u = 645; u < 1403; u += mix(u, [[645, 3.6], [850, 2.2], [1000, 1.5], [1150, 1.1], [1400, 0.9]])) {
    high = !high;
    const key = Math.round(u / 2) * 2;
    const top = mix(u, [[645, 190], [700, 200], [750, 188], [830, 176], [870, 188], [1000, 190], [1200, 190], [1400, 184]]);
    const bot = mix(u, [[645, 290], [750, 305], [850, 315], [1000, 332], [1150, 358], [1300, 375], [1400, 390]]);
    if (!carrierDone && u > 841) {
      carrierDone = true;
      put(840.5, 190);
      put(843, -552);
      put(846, 190);
    } else if (high && peaks[key] && !used.has(key)) {
      used.add(key);
      put(u, peaks[key]);
    } else if (!high && dips[key] && !used.has(key)) {
      used.add(key);
      put(u, dips[key]);
    } else if (high) {
      put(u, top + Math.pow(rnd(), 1.4) * 50);
    } else {
      const r = rnd();
      put(u, bot - 80 * rnd() + (r > 0.84 ? (r - 0.84) * 420 : 0));
    }
  }
  return pts.join(" ");
};
const blueTrace = trace(blueKnots, bluePeaks, blueDips, 4711);
const redTrace = trace(redKnots, redPeaks, redDips, 90210);

const FftChart = () => {
  const x0 = 47;
  const x1 = 582;
  const x = (hz: number) => x0 + Math.log10(hz / 20) * 162;
  const y = (db: number) => 97.5 - db * 1.947;
  const major = [30, 50, 100, 200, 300, 500, 1000, 2000, 3000, 5000, 10000, 20000, 30000];
  const minor = [40, 60, 70, 80, 90, 400, 600, 700, 800, 900, 4000, 6000, 7000, 8000, 9000];
  const names = ["20", "30", "50", "100", "200", "300", "500", "1k", "2k", "3k", "5k", "10k", "20k", "30k"];
  const levels = [40, 20, 0, -20, -40, -60, -80, -100, -120, -140];
  return (
    <Chart viewBox={`0 0 ${VIEW_W} ${VIEW_H}`} role="img" aria-label="FFT">
      <text x="314" y="11" textAnchor="middle">FFT</text>
      {minor.map((f) => <path key={f} d={`M${x(f)} ${TOP}V${BOTTOM}`} stroke="#ececec" />)}
      {levels.map((v) => <path key={v} d={`M${x0} ${y(v - 10)}H${x1}`} stroke="#ececec" />)}
      {major.map((f) => <path key={f} d={`M${x(f)} ${TOP}V${BOTTOM}`} stroke="#cfcfcf" />)}
      {levels.map((v) => (
        <g key={v}>
          <path d={`M${x0} ${y(v)}H${x1}`} stroke="#cfcfcf" />
          <text x={x0 - 5} y={y(v) + 4} textAnchor="end">{v > 0 ? `+${v}` : v}</text>
        </g>
      ))}
      {names.map((n, i) => (
        <text key={n} x={x(i ? major[i - 1] : 20)} y="419" textAnchor="middle">{n}</text>
      ))}
      <Frame x0={x0} x1={x1} />
      <polyline points={blueTrace} fill="none" stroke="#35508a" strokeWidth=".8" strokeLinejoin="bevel" />
      <polyline points={redTrace} fill="none" stroke="#b83238" strokeWidth=".8" strokeLinejoin="bevel" />
      <text x="314" y="431" textAnchor="middle">Frequency (Hz)</text>
      <text transform="translate(14 210) rotate(-90)" textAnchor="middle">Level (dBm)</text>
    </Chart>
  );
};

const ChartCard = ({ title, xUnit, yUnit, children }: { title: string; xUnit: string; yUnit: string; children: React.ReactNode }) => {
  const id = useId();
  return (
    <Card $white>
      <CardHead $wide>
        <h3>{title}</h3>
        <label htmlFor={`${id}x`}>X:</label>
        <Units id={`${id}x`} label={`${title} X`} value={xUnit} />
        <label htmlFor={`${id}y`}>Y:</label>
        <Units id={`${id}y`} label={`${title} Y`} value={yUnit} />
        <IconButton aria-label={`${title} settings`}><Gear /></IconButton>
        <HeadEnd>
          <Divider $gap={0} />
          <IconButton $gap={0} aria-label={`Undock ${title}`}><PopOut /></IconButton>
        </HeadEnd>
      </CardHead>
      {children}
    </Card>
  );
};

/* ---------- meters ---------- */

type Gain = { value: string; fill: number; from: number; to: number };
type MeterData = { title: string; pick: string; unit: string; unitWidth: number; mid?: boolean; focus?: boolean; rows: Gain[] };

const meters: MeterData[] = [
  { title: "RMS Level", pick: "W", unit: "W", unitWidth: 55, focus: true, rows: [
    { value: "79.39", fill: 87, from: 0, to: 90 },
    { value: "81.64", fill: 87, from: 0, to: 90 },
  ] },
  { title: "THD+N Ratio", pick: "%", unit: "%", unitWidth: 50, rows: [
    { value: "0.001484", fill: 20, from: 19, to: 100 },
    { value: "0.001490", fill: 20, from: 19, to: 100 },
  ] },
  { title: "Frequency", pick: "Hz", unit: "kHz", unitWidth: 86, rows: [
    { value: "1.00000", fill: 57, from: 0, to: 89 },
    { value: "1.00000", fill: 57, from: 0, to: 91 },
  ] },
  { title: "Phase", pick: "deg", unit: "deg", unitWidth: 88, mid: true, rows: [
    { value: "0.000", fill: 0, from: 0, to: 0 },
    { value: "-0.012", fill: 0, from: 0, to: 100 },
  ] },
];

const Meter = ({ m }: { m: MeterData }) => (
  <Card>
    <CardHead>
      <h3>{m.title}</h3>
      <Units label={`${m.title} unit`} value={m.pick} focus={m.focus} />
      <IconButton $gap={5} $inner={2} aria-label="Graph"><Graph /><Caret /></IconButton>
      <IconButton aria-label={`${m.title} settings`}><Gear /></IconButton>
      <HeadEnd>
        <Divider $gap={0} />
        <IconButton $gap={5} aria-label={`Undock ${m.title}`}><PopOut /></IconButton>
        <IconButton $gap={0} aria-label={`Close ${m.title}`}><CloseX /></IconButton>
      </HeadEnd>
    </CardHead>
    <MeterBody>
      {m.rows.map((r, i) => (
        <MeterLine key={i}>
          <ChannelName>Ch{i + 1}<Tri w={11} h={11} /></ChannelName>
          <Display $flip={i === 1}>
            <Readout $unitWidth={m.unitWidth}>{r.value}<b>{m.unit}</b></Readout>
            <Gauge>
              <GaugeFill style={{ width: `${r.fill}%` }} />
              {m.mid && <GaugeMid />}
              <GaugePeak style={{ width: `${r.to - r.from}%`, marginLeft: `${r.from}%` }} />
            </Gauge>
          </Display>
        </MeterLine>
      ))}
    </MeterBody>
  </Card>
);

/* ---------- panels ---------- */

const SignalPath = () => (
  <Column>
    <PanelTitle $short>
      <h2>Signal Path Setup</h2>
      <button aria-label="Collapse signal path"><Collapse /></button>
    </PanelTitle>
    <SubBar>
      <PickerButton $large><span>Input/Output</span><Tri w={9} h={10} fill="#fff" /></PickerButton>
      <button aria-label="Undock signal path"><PopOut color="#fff" /></button>
    </SubBar>
    <SideBody>
      <ConfigTitle><PortArrow />Output Configuration</ConfigTitle>
      <Field label="Connector" value="Analog Unbalanced" w={151} top={0}>
        <SmallButton aria-label="Output settings"><Gear s={16} /></SmallButton>
      </Field>
      <ChannelField top={7} />
      <Field label="EQ" value="None" w={151} top={11}>
        <SmallButton $off disabled aria-label="EQ settings"><Gear s={15} off /></SmallButton>
      </Field>
      <Rule />
      <ConfigTitle><PortArrow into />Input Configuration</ConfigTitle>
      <FieldRow $top={0} $height={20}>
        <Controls><Check><input type="checkbox" />Loopback</Check></Controls>
      </FieldRow>
      <Field label="Connector" value="Analog Unbalanced" w={151} top={7}>
        <SmallButton $off disabled aria-label="Input settings"><Gear s={15} off /></SmallButton>
        <SmallButton aria-label="Sensor data"><Notes /></SmallButton>
      </Field>
      <ChannelField top={7} />
      <FieldRow $top={7}><Controls><PushButton $w={138}>Mic Cal / dBSPL...</PushButton></Controls></FieldRow>
      <Field label="Termination" value="100 kohm" w={87} top={8} />
      <FieldRow $top={6} $height={20}>
        <Controls><Check><input type="checkbox" />Use High Performance Sine Analyzer</Check></Controls>
      </FieldRow>
      <FieldRow $top={9}><Controls><PushButton $w={139}>Input Range...</PushButton></Controls></FieldRow>
      <Rule $top={14} />
      <SectionTitle>Filters</SectionTitle>
      <Field label="High-pass" value="DC" w={139} top={1} />
      <Field label="Low-pass" value="ADC passband" w={139} />
      <Field label="Bandwidth" value="22.4k (48 kHz SR)" w={139} />
      <Field label="Weighting" value="None" w={139} />
      <FieldRow $top={7}>
        <FieldLabel htmlFor="filter-eq">EQ:</FieldLabel>
        <Controls>
          <TextBox id="filter-eq" $w={140} $off readOnly value="None" />
          <SmallButton $w={26} aria-label="Filter EQ settings"><Gear s={16} /></SmallButton>
        </Controls>
      </FieldRow>
      <Rule $top={13} />
      <SectionTitle>Device Under Test</SectionTitle>
      <FieldRow $top={0}>
        <FieldLabel htmlFor="dut">DUT Delay:</FieldLabel>
        <Controls><TextBox id="dut" $w={74} defaultValue="0.000 s" /></Controls>
      </FieldRow>
    </SideBody>
  </Column>
);

const Generator = () => (
  <Column>
    <PanelTitle>
      <h2>Generator</h2>
      <button aria-label="Collapse generator"><Collapse /></button>
    </PanelTitle>
    <MidBody>
      <FieldRow $mid $top={0} $height={27}>
        <Controls $gap={6}>
          <GeneratorSwitch><StopMark /><Toggle on label="Generator" /></GeneratorSwitch>
          <Check><input type="checkbox" />Auto On</Check>
        </Controls>
      </FieldRow>
      <Field mid label="Waveform" value="Sine" w={140} h={23} top={8} />
      <FieldRow $mid $top={8}>
        <Controls $indent={1}><Check><input type="radio" name="gen" defaultChecked />High Performance Sine Generator</Check></Controls>
      </FieldRow>
      <FieldRow $mid $top={5}>
        <Controls $indent={32}><Check><input type="checkbox" defaultChecked />Precision Tune</Check></Controls>
      </FieldRow>
      <FieldRow $mid $top={6}>
        <Controls $indent={1}><Check><input type="radio" name="gen" />DAC Generator</Check></Controls>
      </FieldRow>
      <GroupBox>
        <FieldRow $mid $top={0}>
          <Controls><Check><input type="checkbox" defaultChecked />Levels Track Ch1</Check></Controls>
        </FieldRow>
        <FieldRow $mid $top={0} $height={20}><Controls $indent={3}>Level</Controls></FieldRow>
        <ComboField label="Ch1" value="1.000 Vrms" top={0} />
      </GroupBox>
      <ComboField label="Frequency" value="1.00000 kHz" top={3} />
      <FieldRow as="p" $top={13}>Channels:</FieldRow>
      <ChannelButtons><button>1</button><button>2</button></ChannelButtons>
    </MidBody>
    <PanelTitle><h2>Analyzer</h2></PanelTitle>
    <MidBody $fill>
      <SectionTitle $inset={3} $height={20}>Settled Readings</SectionTitle>
      <FieldRow $mid $top={8}>
        <Controls $indent={1}><PushButton $w={82} $start><Gear />Settings...</PushButton></Controls>
      </FieldRow>
      <Rule $short $top={8} />
      <SectionTitle $inset={3}>THD+N</SectionTitle>
      <Field mid label="Notch Tuning" value="Generator Frequency" w={140} h={23} top={4} />
      <Field mid label="Weighting" value="None" w={140} h={23} top={6} />
      <Rule $short $top={6} />
      <SectionTitle $inset={3}>Bandpass Filter</SectionTitle>
      <Field mid label="Tune Mode" value="Generator Frequency" w={140} h={23} top={4} />
      <Rule $short $top={6} />
      <SectionTitle $inset={3}>Reference Channel</SectionTitle>
      <Field mid label="Channel" value="Ch1" w={49} h={23} top={4} />
      <Rule $short $top={6} />
      <SectionTitle $inset={3} $height={24}>IMD</SectionTitle>
      <Field mid label="Type" value="SMPTE/DIN" w={140} h={23} top={0} />
    </MidBody>
  </Column>
);

const tabs = ["Monitors/Meters", "Sweep", "FFT", "Recorder", "Continuous Sweep", "Acoustic Response"];

const Measurements = () => (
  <Column>
    <PanelTitle><h2>Measurements</h2></PanelTitle>
    <Tabs>{tabs.map((t, i) => <Tab key={t} $active={i === 0}>{t}</Tab>)}</Tabs>
    <ToolStrip>
      <IconButton aria-label="Transfer"><Swap /></IconButton>
      <IconButton aria-label="Square wave"><Square /></IconButton>
      <IconButton aria-label="Add wave"><AddWave /></IconButton>
      <Divider $gap={3} />
      <Toggle on label="Monitors" />
      <StripEnd><IconButton $gap={0} aria-label="Dock up"><Dock /></IconButton></StripEnd>
    </ToolStrip>
    <ChartRow>
      <ChartCard title="Scope" xUnit="s" yUnit="V"><ScopeChart /></ChartCard>
      <ChartCard title="FFT" xUnit="Hz" yUnit="dBm"><FftChart /></ChartCard>
    </ChartRow>
    <Splitter><i /><i /><i /></Splitter>
    <ToolStrip>
      <IconButton $gap={8}><Plus /><IconButton as="span" $gap={0} $inner={6}>Add Meter<Caret /></IconButton></IconButton>
      <Divider $gap={3} />
      <IconButton $gap={9}><SaveData />Save Meter Data</IconButton>
      <Divider $gap={3} />
      <IconButton><Play />Regulate</IconButton>
      <StripEnd><IconButton $gap={0} aria-label="Dock down"><Dock down /></IconButton></StripEnd>
    </ToolStrip>
    <MeterPane>
      <MeterGrid>
        {meters.map((m) => <Meter key={m.title} m={m} />)}
        <EmptySlot />
      </MeterGrid>
      <ScrollTrack>
        <ScrollArrow aria-label="Scroll up">
          <svg width="9" height="6" viewBox="0 0 9 6"><path d="M1 5l3.500-3.500L8 5" fill="none" stroke="#505050" strokeWidth="1.800" /></svg>
        </ScrollArrow>
        <ScrollThumb />
        <ScrollArrow aria-label="Scroll down">
          <svg width="9" height="6" viewBox="0 0 9 6"><path d="M1 1l3.500 3.500L8 1" fill="none" stroke="#505050" strokeWidth="1.800" /></svg>
        </ScrollArrow>
      </ScrollTrack>
    </MeterPane>
  </Column>
);

export default function App() {
  return (
    <Page>
      <Global />
      <TitleBar>
        <ApLogo s={14} />
        HiFi.approjx - APx500 v5.0
        <WindowButtons>
          <WindowButton aria-label="Minimize"><svg width="10" height="10"><path d="M0 5.500h10" stroke="#111" /></svg></WindowButton>
          <WindowButton aria-label="Restore">
            <svg width="10" height="10"><path d="M.5 2.500h7v7h-7zM2.500 2.500v-2h7v7h-2" fill="none" stroke="#111" /></svg>
          </WindowButton>
          <WindowButton aria-label="Close"><svg width="10" height="10"><path d="M0 0l10 10M10 0L0 10" stroke="#111" /></svg></WindowButton>
        </WindowButtons>
      </TitleBar>
      <TopArea>
        <div>
          <MenuBar>
            {["File", "View", "Measurements", "Project", "Help"].map((m) => <MenuItem key={m}>{m}</MenuItem>)}
          </MenuBar>
          <ToolRow>
            <IconButton $inner={5} aria-label="New"><NewDoc /><Caret /></IconButton>
            <IconButton aria-label="Open"><OpenDoc /></IconButton>
            <IconButton aria-label="Save"><Save /></IconButton>
            <IconButton aria-label="Settings"><Gear /></IconButton>
            <Divider $light $gap={3} />
            <IconButton aria-label="Transfer"><Swap /></IconButton>
            <IconButton aria-label="Square wave"><Square /></IconButton>
            <IconButton aria-label="Add wave"><AddWave /></IconButton>
            <Divider $light $gap={3} />
            <Speaker />
            <ToolLabel>Audible Monitor</ToolLabel>
            <Toggle label="Audible Monitor" />
          </ToolRow>
        </div>
        <PickerButton><span>Bench Mode</span><Tri w={9} h={9} fill="#fff" /></PickerButton>
      </TopArea>
      <Workspace>
        <SignalPath />
        <Generator />
        <Measurements />
      </Workspace>
      <StatusBar>
        <span>Output:</span>
        <output>Analog Unbalanced 2 Ch, 20 ohm</output>
        <span>Input:</span>
        <output>Analog Unbalanced 2 Ch, 100 kohm</output>
        <output>40.00 Vrms</output>
        <output>DC - 22.4 kHz</output>
      </StatusBar>
      <Taskbar>
        <TaskButton aria-label="Start">
          <svg width="16" height="16" viewBox="0 0 16 16"><path d="M0 2.300l6.500-.9v6.200H0zM7.300 1.300L16 0v7.600H7.300zM0 8.400h6.500v6.200L0 13.700zM7.300 8.400H16V16l-8.700-1.300z" fill="#fff" /></svg>
        </TaskButton>
        <TaskButton aria-label="Search">
          <svg width="17" height="17" viewBox="0 0 17 17"><circle cx="11" cy="6" r="5" fill="none" stroke="#fff" strokeWidth="1.300" /><path d="M7.500 9.500l-7 7" stroke="#fff" strokeWidth="1.300" /></svg>
        </TaskButton>
        <TaskButton aria-label="Assistant">
          <svg width="17" height="17" viewBox="0 0 17 17"><circle cx="8.500" cy="8.500" r="6.600" fill="none" stroke="#fff" strokeWidth="2" /></svg>
        </TaskButton>
        <TaskButton aria-label="Task view">
          <svg width="17" height="16" viewBox="0 0 17 16" fill="none" stroke="#fff"><path d="M.5 0v2.500h10V0M.5 16v-2.500h10V16M.5 4.500h10v7H.5zM14.500 0v16" /><path d="M13 4.500h3v2h-3z" fill="#fff" /></svg>
        </TaskButton>
        <TaskButton $w={53} aria-label="Edge">
          <svg width="20" height="21" viewBox="0 0 20 21"><path d="M0 9.500C1 3.500 5 0 10.500 0 16.500 0 20 4 20 9.500V12H6.800c.2 3.500 3 5 6.200 5 2.200 0 4.200-.6 5.800-1.600V19.500C17 20.500 14.500 21 12 21 6 21 2.500 17.500 2.500 12.500 2.500 9.500 4 7 6.500 5.500 3.500 5.800 1.500 7.300 0 9.500zM6.900 8.500h7.400c0-2.500-1.300-4-3.600-4S7.200 6.300 6.900 8.500z" fill="#0a79d8" /></svg>
        </TaskButton>
        <TaskButton $w={49} aria-label="File Explorer">
          <svg width="22" height="18" viewBox="0 0 22 18"><path d="M0 0h9l1 2h12v16H0z" fill="#f8d46a" /><path d="M0 0h9l1 2-1 2H0z" fill="#e0a22e" /><path d="M4 18v-6c0-1.500.5-2 2-2h10c1.500 0 2 .5 2 2v6h-3.500v-4h-7v4z" fill="#4aa0d8" /></svg>
        </TaskButton>
        <TaskButton $w={44} $active aria-label="APx500"><ApLogo s={24} /></TaskButton>
        <Tray>
          <TaskButton $w={24} aria-label="Hidden icons"><svg width="12" height="7"><path d="M1 6l5-5 5 5" fill="none" stroke="#fff" strokeWidth="1.200" /></svg></TaskButton>
          <TaskButton $w={24} aria-label="Network">
            <svg width="17" height="17" viewBox="0 0 17 17" fill="none" stroke="#fff"><circle cx="8" cy="8" r="7.300" /><ellipse cx="8" cy="8" rx="3.500" ry="7.300" /><path d="M1 5.500h14M1 10.500h10M8 1v14" /><circle cx="13" cy="13" r="3.400" fill="#444" /><path d="M10.700 10.700l4.600 4.600" /></svg>
          </TaskButton>
          <TaskButton $w={24} aria-label="Volume muted">
            <svg width="17" height="16" viewBox="0 0 17 16"><path d="M.5 5.500h2.500l4-4v12l-4-4H.5z" fill="none" stroke="#fff" /><circle cx="12" cy="11" r="4.500" fill="#d3323a" /><path d="M10.300 9.300l3.400 3.400M13.700 9.300l-3.400 3.400" stroke="#fff" strokeWidth="1.200" /></svg>
          </TaskButton>
          <TaskButton $w={24} aria-label="Input mode">
            <svg width="12" height="16" viewBox="0 0 12 16"><path d="M1 16L6 1l5 15M2.700 11h6.600" fill="none" stroke="#fff" strokeWidth="1.400" /></svg>
          </TaskButton>
          <Clock>10:18<br />2026/06/09</Clock>
          <TaskButton $w={42} aria-label="Notifications">
            <svg width="16" height="17" viewBox="0 0 16 17"><path d="M.6.6h14.800v12H10l-2.500 3v-3H.6z" fill="none" stroke="#fff" strokeWidth="1.200" /></svg>
          </TaskButton>
          <Edge />
        </Tray>
      </Taskbar>
    </Page>
  );
}
